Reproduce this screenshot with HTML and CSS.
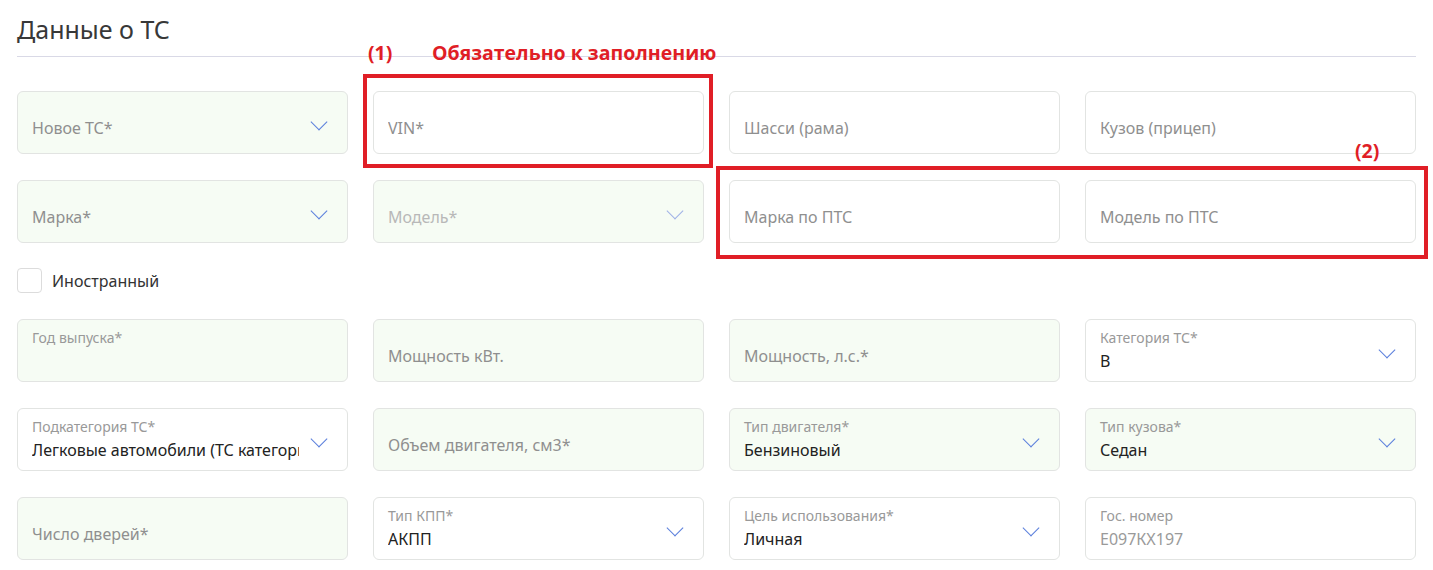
FILE: index.html
```html
<!DOCTYPE html>
<html lang="ru">
<head>
  <meta charset="UTF-8">
  <title>Данные о ТС</title>
  <link rel="stylesheet" href="styles.css">
</head>
<body>
  <div class="page">
    <h2 class="title">Данные о ТС</h2>

    <div class="grid">
      <div class="field green select"><span class="label"></span><span class="ph">Новое ТС*</span><i class="chev"></i></div>
      <div class="field"><span class="label"></span><span class="ph">VIN*</span></div>
      <div class="field"><span class="label"></span><span class="ph">Шасси (рама)</span></div>
      <div class="field"><span class="label"></span><span class="ph">Кузов (прицеп)</span></div>

      <div class="field green select"><span class="label"></span><span class="ph">Марка*</span><i class="chev"></i></div>
      <div class="field green select disabled"><span class="label"></span><span class="ph">Модель*</span><i class="chev"></i></div>
      <div class="field"><span class="label"></span><span class="ph">Марка по ПТС</span></div>
      <div class="field"><span class="label"></span><span class="ph">Модель по ПТС</span></div>
    </div>

    <label class="check"><span class="box"></span>Иностранный</label>

    <div class="grid">
      <div class="field green"><span class="label">Год выпуска*</span><span class="ph"></span></div>
      <div class="field green"><span class="label"></span><span class="ph">Мощность кВт.</span></div>
      <div class="field green"><span class="label"></span><span class="ph">Мощность, л.с.*</span></div>
      <div class="field select"><span class="label">Категория ТС*</span><span class="val">B</span><i class="chev"></i></div>

      <div class="field select"><span class="label">Подкатегория ТС*</span><span class="val">Легковые автомобили (ТС категории B)</span><i class="chev"></i></div>
      <div class="field green"><span class="label"></span><span class="ph">Объем двигателя, см3*</span></div>
      <div class="field green select"><span class="label">Тип двигателя*</span><span class="val">Бензиновый</span><i class="chev"></i></div>
      <div class="field green select"><span class="label">Тип кузова*</span><span class="val">Седан</span><i class="chev"></i></div>

      <div class="field green"><span class="label"></span><span class="ph">Число дверей*</span></div>
      <div class="field select"><span class="label">Тип КПП*</span><span class="val">АКПП</span><i class="chev"></i></div>
      <div class="field select"><span class="label">Цель использования*</span><span class="val">Личная</span><i class="chev"></i></div>
      <div class="field"><span class="label">Гос. номер</span><span class="val muted">Е097КХ197</span></div>
    </div>

    <!-- пометки поверх формы -->
    <div class="mark mark1"></div>
    <div class="note note1">(1)</div>
    <div class="note note1b">Обязательно к заполнению</div>
    <div class="mark mark2"></div>
    <div class="note note2">(2)</div>
  </div>
</body>
</html>
```
FILE: styles.css
```css
* {
  padding: 0;
  margin: 0;
  box-sizing: border-box;
}
body {
  font-family: "Noto Sans", "Open Sans", sans-serif;
  color: #222;
  background: #fff;
}
.page {
  position: relative;
  padding: 12px 17px 0;
  width: 1433px;
}
.title {
  font-size: 25px;
  font-weight: 400;
  color: #383838;
  line-height: 34px;
  padding-bottom: 10px;
  border-bottom: 1px solid #d9d9e6;
  margin-bottom: 34px;
  width: 1399px;
}
.grid {
  display: grid;
  grid-template-columns: repeat(4, 331px);
  column-gap: 25px;
  row-gap: 26px;
}
.field {
  position: relative;
  height: 63px;
  border: 1px solid #e2e4e2;
  border-radius: 6px;
  background: #fff;
  padding: 8px 48px 0 14px;
  display: flex;
  flex-direction: column;
}
.field.green {
  background: #f6fcf4;
}
.label {
  height: 20px;
  font-size: 14px;
  line-height: 20px;
  color: #999;
  white-space: nowrap;
}
.ph,
.val {
  font-size: 16px;
  line-height: 26px;
  white-space: nowrap;
  overflow: hidden;
}
.ph {
  color: #8f8f8f;
  margin-top: -5px;
}
.val {
  color: #222;
}
.val.muted {
  color: #9a9a9a;
}
.disabled .ph {
  color: #b8b8b8;
}
.chev {
  position: absolute;
  right: 22px;
  top: 24px;
  width: 12px;
  height: 12px;
  border-right: 1.6px solid #5b7fdc;
  border-bottom: 1.6px solid #5b7fdc;
  transform: rotate(45deg);
}
.disabled .chev {
  border-color: #9fb2e6;
}
.check {
  display: flex;
  align-items: center;
  gap: 10px;
  height: 25px;
  margin: 25px 0 26px;
  font-size: 16px;
  color: #333;
}
.box {
  width: 25px;
  height: 25px;
  border: 1px solid #dcdcdc;
  border-radius: 4px;
}
.mark {
  position: absolute;
  border: 4px solid #e01e26;
}
.mark1 {
  left: 363px;
  top: 74px;
  width: 350px;
  height: 94px;
}
.mark2 {
  left: 716px;
  top: 166px;
  width: 712px;
  height: 93px;
}
.note {
  position: absolute;
  color: #e01e26;
  font-family: "Open Sans", "Noto Sans", sans-serif;
  font-weight: 700;
  font-size: 19.5px;
  line-height: 24px;
}
.note1 {
  left: 368px;
  top: 41px;
}
.note1b {
  left: 432px;
  top: 41px;
}
.note2 {
  left: 1355px;
  top: 139px;
}
```
